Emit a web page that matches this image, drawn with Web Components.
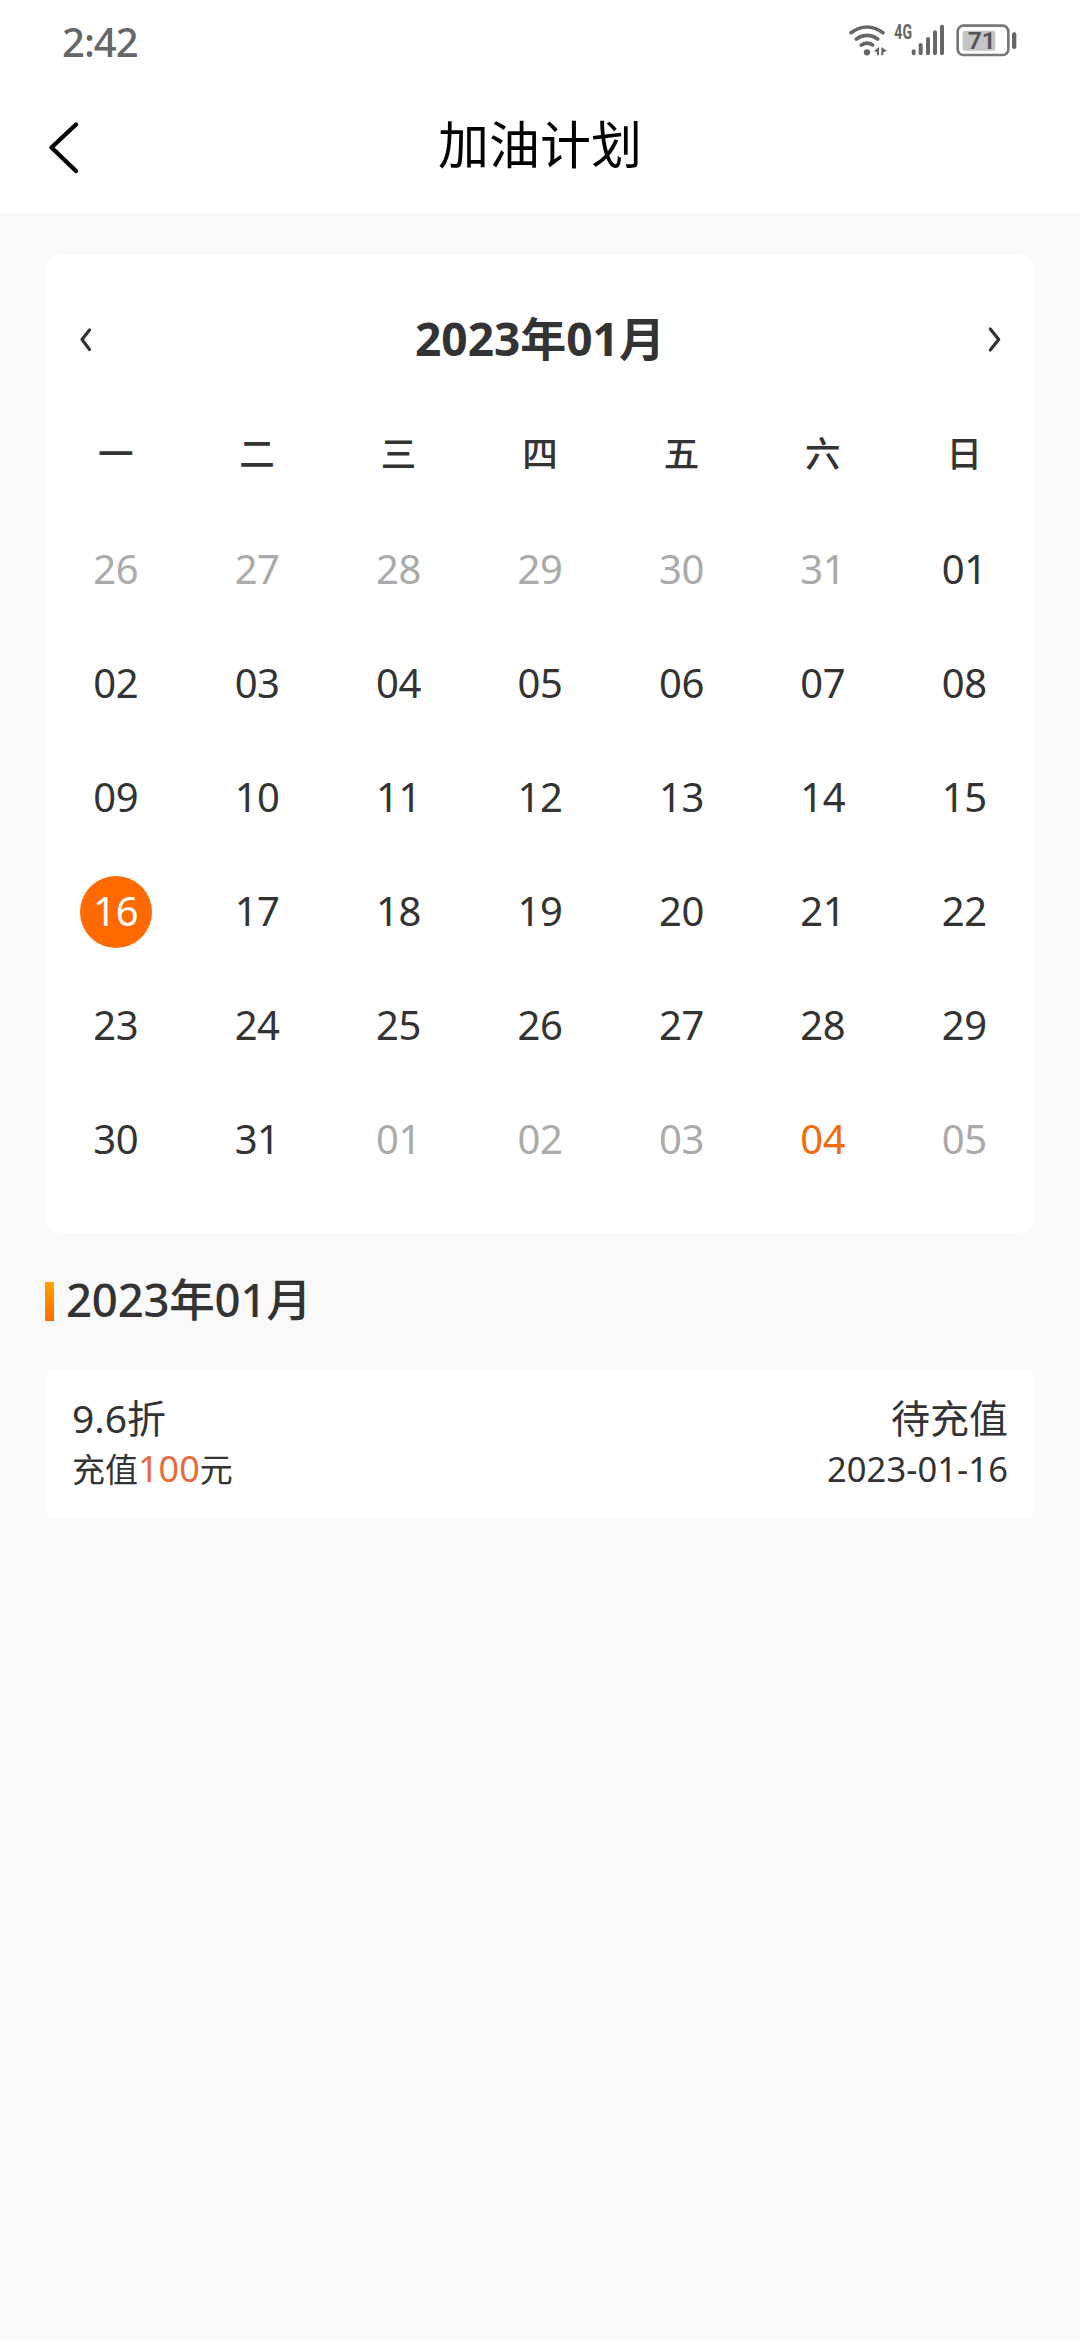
<!DOCTYPE html>
<html lang="zh-CN">
<head>
<meta charset="UTF-8">
<meta name="viewport" content="width=device-width, initial-scale=1.0">
<title>加油计划</title>
<style>
    body {
        margin: 0;
        min-height: 2340px;
        background: #f9f9f9;
        color: #333;
        font-family: "Noto Sans", "Noto Sans CJK SC", sans-serif;
    }
    main {
        display: flex;
        flex-direction: column;
        padding: 42px 45px 0;
    }
</style>
</head>
<body>
    <status-bar time="2:42" battery="71"></status-bar>
    <nav-bar>加油计划</nav-bar>
    <main>
        <month-calendar label="2023年01月" selected="16"></month-calendar>
        <section-title>2023年01月</section-title>
        <plan-item>
            <span slot="discount">9.6折</span>
            <span slot="status">待充值</span>
            <span slot="amount">100</span>
            <span slot="date">2023-01-16</span>
        </plan-item>
    </main>

<script>
class StatusBar extends HTMLElement {
    connectedCallback() {
        const shadow = this.attachShadow({ mode: "open" });
        shadow.innerHTML = `
            <style>
                :host {
                    display: flex;
                    justify-content: space-between;
                    box-sizing: border-box;
                    height: 84px;
                    padding: 0 63px 0 62px;
                    background: #fff;
                    color: #666;
                }
                .time {
                    font-size: 40px;
                    font-weight: 500;
                    line-height: 83px;
                    letter-spacing: -1px;
                }
                .icons {
                    display: flex;
                    padding-top: 22px;
                }
                svg {
                    display: block;
                    height: 36px;
                }
                text {
                    font-family: Roboto, sans-serif;
                    font-weight: 700;
                }
            </style>
            <div class="time">${this.getAttribute("time")}</div>
            <div class="icons">
                <svg width="46" viewBox="54 36 138 108" fill="none" stroke="#666" stroke-width="11" stroke-linecap="round">
                    <path d="M63 68Q111 34 159 68M79 87Q111 65 143 87M94 105Q111 94 128 105"/>
                    <circle cx="111" cy="127" r="9.5" fill="#666" stroke="none"/>
                    <path d="M131 124L147 111V136H141V126ZM154 111L171 123L160 127V136H154Z" fill="#666" stroke="none"/>
                </svg>
                <svg width="62" viewBox="192 36 186 108" fill="#666">
                    <text x="193" y="87" font-size="58" textLength="53" lengthAdjust="spacingAndGlyphs">4G</text>
                    <path d="M251 124V130M272 105V130M294 87V130M315 67V130M336 50V130" stroke="#666" stroke-width="12" stroke-linecap="round"/>
                </svg>
                <svg width="61" viewBox="378 36 183 108" fill="#666">
                    <rect x="383" y="47" width="152" height="88" rx="17" fill="#fff" stroke="#777" stroke-width="8"/>
                    <rect x="398" y="62" width="98" height="60" rx="6" fill="#c4c4c4"/>
                    <rect x="546" y="67" width="13" height="50" rx="6"/>
                    <text x="413" y="117" font-size="71" textLength="84" lengthAdjust="spacingAndGlyphs" style="fill:#555;font-weight:600">${this.getAttribute("battery")}</text>
                </svg>
            </div>
        `;
    }
}
customElements.define("status-bar", StatusBar);

class NavBar extends HTMLElement {
    connectedCallback() {
        const shadow = this.attachShadow({ mode: "open" });
        shadow.innerHTML = `
            <style>
                :host {
                    display: grid;
                    grid-template-columns: 100px 1fr 100px;
                    height: 129px;
                    background: #fff;
                    color: #000;
                }
                svg {
                    display: block;
                    margin: 36px 0 0 46px;
                }
                .title {
                    text-align: center;
                    font-size: 51px;
                    line-height: 120px;
                }
            </style>
            <svg width="34" height="56" viewBox="0 0 34 56" fill="none" stroke="#000" stroke-width="4.4" stroke-linecap="round" stroke-linejoin="round">
                <path d="M30 4.5L5.5 27.5L30 51"/>
            </svg>
            <div class="title"><slot></slot></div>
        `;
    }
}
customElements.define("nav-bar", NavBar);

class DayCell extends HTMLElement {
    connectedCallback() {
        const shadow = this.attachShadow({ mode: "open" });
        shadow.innerHTML = `
            <style>
                :host {
                    display: flex;
                    align-items: center;
                    justify-content: center;
                    height: 114px;
                    font-size: 40px;
                    letter-spacing: -.4px;
                }
                :host([type="muted"]) { color: #aaa; }
                :host([type="today"]) { color: #f56a0b; }
                :host([type="selected"]) { color: #fff; }
                :host([type="week"]) {
                    font-size: 35.5px;
                    font-weight: 500;
                    letter-spacing: 0;
                }
                .num {
                    width: 72px;
                    height: 72px;
                    line-height: 69px;
                    text-align: center;
                    border-radius: 50%;
                }
                :host([type="week"]) .num { line-height: 67px; }
                :host([type="selected"]) .num { background: #ff6a00; }
            </style>
            <div class="num"><slot></slot></div>
        `;
    }
}
customElements.define("day-cell", DayCell);

class MonthCalendar extends HTMLElement {
    connectedCallback() {
        const pad = (n) => String(n).padStart(2, "0");
        const cell = (text, type = "") => `<day-cell type="${type}">${text}</day-cell>`;
        const selected = this.getAttribute("selected");
        let cells = [..."一二三四五六日"].map((w) => cell(w, "week")).join("");
        for (let d = 26; d <= 31; d++) cells += cell(d, "muted");
        for (let d = 1; d <= 31; d++) cells += cell(pad(d), pad(d) === selected ? "selected" : "");
        for (let d = 1; d <= 5; d++) cells += cell(pad(d), d === 4 ? "today" : "muted");

        const shadow = this.attachShadow({ mode: "open" });
        shadow.innerHTML = `
            <style>
                :host {
                    display: block;
                    box-sizing: border-box;
                    height: 978px;
                    border-radius: 15px;
                    background: #fff;
                }
                header {
                    display: flex;
                    align-items: flex-start;
                    justify-content: space-between;
                    box-sizing: border-box;
                    height: 144px;
                    padding: 53px 34px 0;
                }
                .label {
                    font-size: 46px;
                    font-weight: 700;
                    line-height: 60px;
                }
                svg {
                    display: block;
                    margin-top: 18px;
                }
                .days {
                    display: grid;
                    grid-template-columns: repeat(7, 1fr);
                }
            </style>
            <header>
                <svg width="14" height="28" viewBox="0 0 14 28" fill="none" stroke="#333" stroke-width="3.2" stroke-linecap="round" stroke-linejoin="round">
                    <path d="M10.5 4L3 13.5L10.5 23.5"/>
                </svg>
                <div class="label">${this.getAttribute("label")}</div>
                <svg width="14" height="28" viewBox="0 0 14 28" fill="none" stroke="#333" stroke-width="3.2" stroke-linecap="round" stroke-linejoin="round">
                    <path d="M3.3 3L11.7 13.5L3.3 24"/>
                </svg>
            </header>
            <div class="days">${cells}</div>
        `;
    }
}
customElements.define("month-calendar", MonthCalendar);

class SectionTitle extends HTMLElement {
    connectedCallback() {
        const shadow = this.attachShadow({ mode: "open" });
        shadow.innerHTML = `
            <style>
                :host {
                    display: flex;
                    align-items: center;
                    gap: 12px;
                    height: 137px;
                    font-size: 45.5px;
                    font-weight: 500;
                    line-height: 60px;
                    letter-spacing: -.2px;
                }
                .bar {
                    width: 9px;
                    height: 39px;
                    background: linear-gradient(#ffa300, #ff6a00);
                }
                .text { padding-bottom: 5px; }
            </style>
            <div class="bar"></div>
            <div class="text"><slot></slot></div>
        `;
    }
}
customElements.define("section-title", SectionTitle);

class PlanItem extends HTMLElement {
    connectedCallback() {
        const shadow = this.attachShadow({ mode: "open" });
        shadow.innerHTML = `
            <style>
                :host {
                    display: flex;
                    flex-direction: column;
                    box-sizing: border-box;
                    height: 148px;
                    padding: 22px 27px 0;
                    border-radius: 9px;
                    background: #fff;
                }
                .row {
                    display: flex;
                    justify-content: space-between;
                    font-size: 39px;
                    line-height: 52px;
                }
                .sub {
                    font-size: 33px;
                    line-height: 49px;
                }
                .num {
                    color: #e86b3d;
                    font-size: 36px;
                }
                .date {
                    font-size: 34.5px;
                    letter-spacing: .1px;
                }
            </style>
            <div class="row">
                <slot name="discount"></slot>
                <slot name="status"></slot>
            </div>
            <div class="row sub">
                <div>充值<span class="num"><slot name="amount"></slot></span>元</div>
                <div class="date"><slot name="date"></slot></div>
            </div>
        `;
    }
}
customElements.define("plan-item", PlanItem);
</script>
</body>
</html>
